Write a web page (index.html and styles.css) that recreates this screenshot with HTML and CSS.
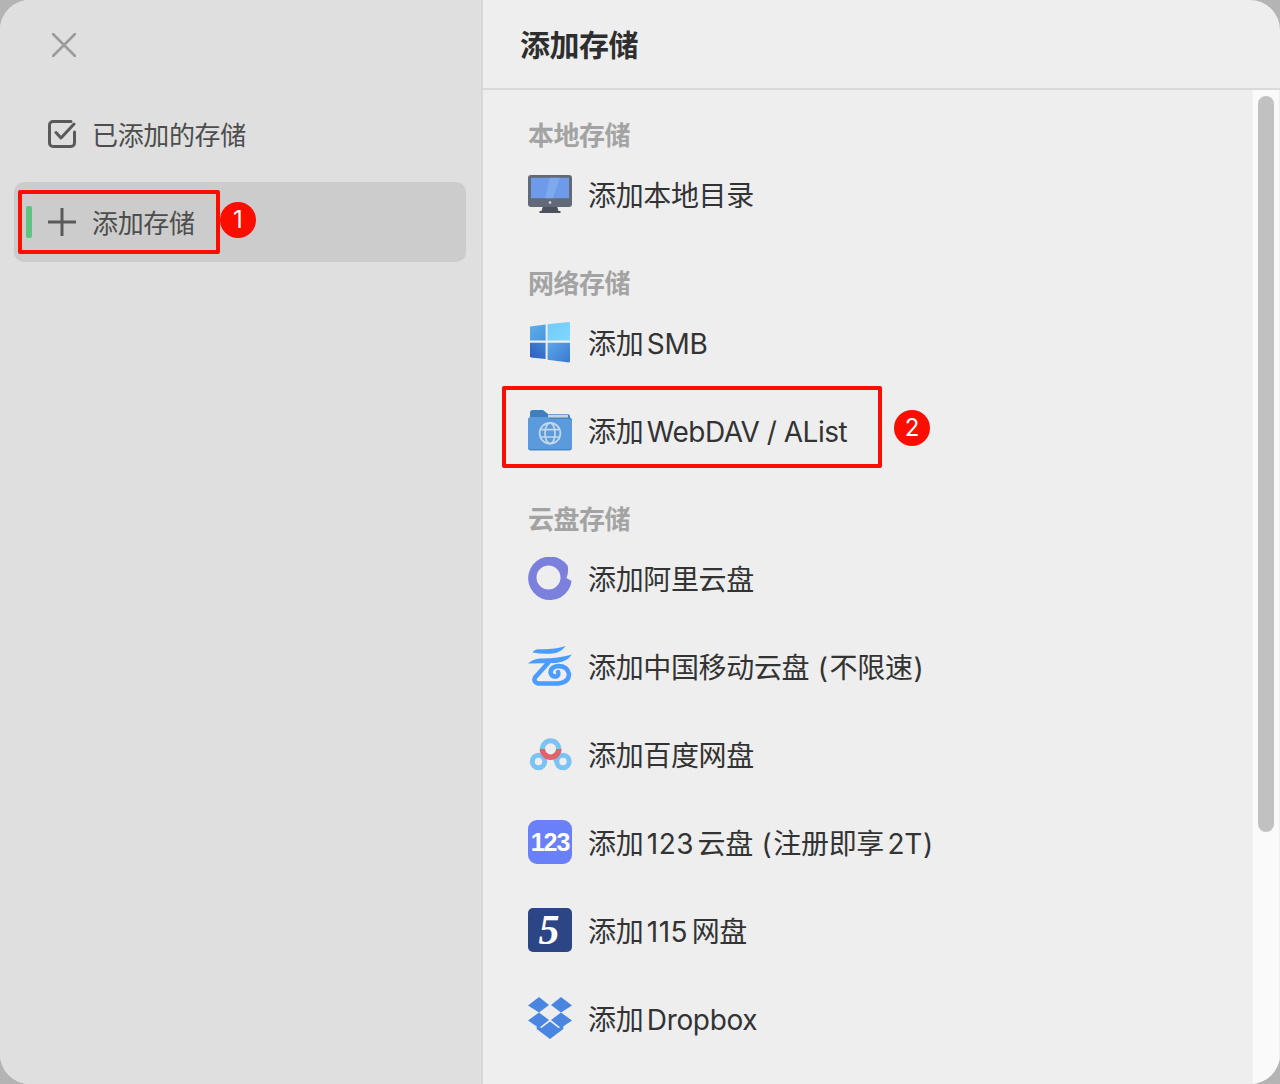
FILE: index.html
```html
<!DOCTYPE html>
<html lang="zh-CN">
<head>
<meta charset="utf-8">
<title>添加存储</title>
<link rel="stylesheet" href="styles.css">
</head>
<body>
<div class="window">
  <aside class="sidebar">
    <div class="side-head">
      <svg class="close" viewBox="0 0 24 24"><path d="M1 1 23 23M23 1 1 23"/></svg>
    </div>
    <nav class="nav">
      <div class="nav-item">
        <svg class="nav-icon" viewBox="0 0 28 28"><path d="M23 1.5H5A3.5 3.5 0 0 0 1.5 5V23A3.5 3.5 0 0 0 5 26.5H23A3.5 3.5 0 0 0 26.5 23V12M8 12.5 13 18 26 4"/></svg>
        <span class="nav-text">已添加的存储</span>
      </div>
      <div class="nav-item active">
        <i class="active-bar"></i>
        <svg class="nav-icon" viewBox="0 0 28 28"><path d="M14 0V28M0 14H28"/></svg>
        <span class="nav-text">添加存储</span>
      </div>
    </nav>
  </aside>
  <main class="main">
    <header class="main-head"><span class="head-text">添加存储</span></header>
    <div class="main-body">
      <div class="list">
        <section class="group">
          <h2 class="group-title">本地存储</h2>
          <div class="row">
            <svg class="logo" viewBox="0 0 44 44">
              <path fill="#4b525e" d="M15 33H29L30.5 38H32.5V40H11.5V38H13.5Z"/>
              <rect y="2" width="44" height="32" rx="3" fill="#636a77"/>
              <rect x="3" y="4.8" width="38" height="20.4" fill="#6d9bea"/>
              <path fill="#7fa8ed" d="M22 4.8H32L25 25.2H17Z"/>
              <circle cx="22" cy="29.6" r="1.3" fill="#d5d8dd"/>
            </svg>
            <span class="row-text">添加本地目录</span>
          </div>
        </section>
        <section class="group">
          <h2 class="group-title">网络存储</h2>
          <div class="row">
            <svg class="logo" viewBox="0 0 44 44">
              <defs>
                <linearGradient id="w1" x1="0" y1="0" x2="1" y2="1"><stop offset="0" stop-color="#5cb0ea"/><stop offset="1" stop-color="#4a94dd"/></linearGradient>
                <linearGradient id="w2" x1="0" y1="0" x2="1" y2="1"><stop offset="0" stop-color="#6fcbf8"/><stop offset="1" stop-color="#80d8ff"/></linearGradient>
                <linearGradient id="w3" x1="1" y1="0" x2="0" y2="1"><stop offset="0" stop-color="#3f86d8"/><stop offset="1" stop-color="#2f5cbc"/></linearGradient>
                <linearGradient id="w4" x1="0" y1="0" x2="1" y2="1"><stop offset="0" stop-color="#5aa8e8"/><stop offset="1" stop-color="#3b78cf"/></linearGradient>
              </defs>
              <path fill="url(#w1)" d="M2 5.5 17.6 3.6V19.6H2Z"/>
              <path fill="url(#w2)" d="M19.6 3.3 41 1 42 2V19.6H19.6Z"/>
              <path fill="url(#w3)" d="M2 21.8H17.6V38L3 36.4 2 35.4Z"/>
              <path fill="url(#w4)" d="M19.6 21.8H42V40.5L41 41.4 19.6 38.8Z"/>
            </svg>
            <span class="row-text">添加 SMB</span>
          </div>
          <div class="row">
            <svg class="logo" viewBox="0 0 44 44">
              <path fill="#3f7fbe" d="M2 4A3 3 0 0 1 5 1H15L20 5H39A3 3 0 0 1 42 8V14H2Z"/>
              <path fill="#c9d3dc" d="M20 5.6H40V12H20Z"/>
              <rect y="8.5" width="44" height="33" rx="3" fill="#4a86c5"/>
              <path fill="#5b9bdc" d="M3 8H19L22 10H41A3 3 0 0 1 44 13V37A3 3 0 0 1 41 40H3A3 3 0 0 1 0 37V11A3 3 0 0 1 3 8Z"/>
              <g class="globe">
                <circle cx="22" cy="24.3" r="10.4"/>
                <ellipse cx="22" cy="24.3" rx="5" ry="10.4"/>
                <path d="M13 20.6H31M13 28H31"/>
              </g>
            </svg>
            <span class="row-text">添加 <span class="wide">WebDAV / AList</span></span>
          </div>
        </section>
        <section class="group">
          <h2 class="group-title">云盘存储</h2>
          <div class="row">
            <svg class="logo" viewBox="0 0 44 44">
              <path fill="#7a80dc" fill-rule="evenodd" d="M43.6 24A21.8 21.8 0 1 1 39.6 8.5Q41 15 38.5 21ZM32.5 20.5A12 12 0 1 0 8.5 20.5A12 12 0 1 0 32.5 20.5Z"/>
            </svg>
            <span class="row-text">添加阿里云盘</span>
          </div>
          <div class="row">
            <svg class="logo" viewBox="0 0 44 44">
              <g fill="#4b9cff">
                <path d="M4.5 7.5Q7 4 11 4.2Q25 5 37.5 1Q33 7.5 25 8.5Q15 9.5 4.5 7.5Z"/>
                <path d="M0 18.5Q5 14 12 13.5Q28 14 44 9.5Q39 17 28 18Q14 18 0 18.5Z"/>
              </g>
              <path class="cm-stroke" d="M20.5 17.5 7 32.5Q5 37 10 38.5H30Q41 37.5 41 29Q39.5 21 30 21Q22.5 22 22.5 27.5Q23.5 32 28 31.5Q31.5 30.5 30 27"/>
            </svg>
            <span class="row-text">添加中国移动云盘 <span class="p-open">(</span>不限速<span class="p-close">)</span></span>
          </div>
          <div class="row">
            <svg class="logo" viewBox="0 0 44 44">
              <g class="bd-blue">
                <path d="M14.4 16A8.2 8.2 0 0 1 30.8 16"/>
                <circle cx="10.5" cy="28.5" r="6.2"/>
                <circle cx="35" cy="28.5" r="6.2"/>
                <path d="M16 25 19 23M30 23 28 27"/>
              </g>
              <path class="bd-red" d="M14.4 16A8.2 8.2 0 0 0 30.8 16"/>
            </svg>
            <span class="row-text">添加百度网盘</span>
          </div>
          <div class="row">
            <svg class="logo logo-up" viewBox="0 0 44 44">
              <rect width="44" height="44" rx="9" fill="#6a80f9"/>
              <text class="logo-123" x="22" y="31" text-anchor="middle">123</text>
            </svg>
            <span class="row-text">添加 <span class="num">123</span> 云盘 <span class="p-open">(</span>注册即享 2T<span class="p-close">)</span></span>
          </div>
          <div class="row">
            <svg class="logo logo-up" viewBox="0 0 44 44">
              <rect width="44" height="44" rx="5" fill="#2c4585"/>
              <text class="logo-115" x="21" y="36" text-anchor="middle">5</text>
            </svg>
            <span class="row-text">添加 <span class="num">115</span> 网盘</span>
          </div>
          <div class="row">
            <svg class="logo" viewBox="0 0 44 44">
              <path fill="#4a86e0" d="M11 0 21 8 11 15.5 0 8.5ZM33 0 44 8.5 33 15.5 23 8ZM11 15.5 21 23 11 31 0 23.5ZM33 15.5 44 23.5 33 31 23 23ZM22 24.5 30.5 31 35.3 28.8V32L22 42 8.7 32V28.8L13.5 31Z"/>
            </svg>
            <span class="row-text">添加 Dropbox</span>
          </div>
        </section>
      </div>
      <div class="track"><div class="thumb"></div></div>
    </div>
  </main>
  <div class="mark mark-one"></div>
  <div class="badge badge-one">1</div>
  <div class="mark mark-two"></div>
  <div class="badge badge-two">2</div>
</div>
</body>
</html>
```

FILE: styles.css
```css
* { box-sizing: border-box; }
html, body { margin: 0; height: 100%; }
body {
  background: #b4b4b4;
  overflow: hidden;
  font-family: "Inter", "Noto Sans CJK SC", sans-serif;
}
.window {
  position: relative;
  display: flex;
  width: 1280px;
  height: 1084px;
  border-radius: 30px;
  overflow: hidden;
  background: #eeeeee;
}
.sidebar {
  width: 483px;
  flex: none;
  padding: 0 15px 0 14px;
  background: #dfdfdf;
  border-right: 2px solid #d7d7d7;
}
.side-head { height: 94px; padding: 33px 0 0 38px; }
.close { display: block; width: 24px; height: 24px; }
.close path { fill: none; stroke: #9b9b9b; stroke-width: 2.6; stroke-linecap: round; }
.nav { display: flex; flex-direction: column; gap: 8px; }
.nav-item {
  display: flex;
  align-items: center;
  gap: 16px;
  height: 80px;
  padding-left: 34px;
  border-radius: 10px;
  font-size: 26px;
  letter-spacing: -0.35px;
  color: #4d4d4d;
}
.nav-item.active { background: #cccccc; padding-left: 12px; }
.nav-text { margin-top: -2px; }
.active-bar {
  width: 6px;
  height: 32px;
  border-radius: 2px;
  background: #5ec581;
}
.nav-icon { width: 28px; height: 28px; flex: none; }
.nav-icon path { fill: none; stroke: #5a5a5a; stroke-width: 3; stroke-linecap: round; stroke-linejoin: round; }
.main { flex: 1; min-width: 0; display: flex; flex-direction: column; }
.main-head {
  height: 90px;
  flex: none;
  padding: 0 0 0 37px;
  display: flex;
  align-items: center;
  border-bottom: 2px solid #d9d9d9;
  font-size: 30px;
  font-weight: 600;
  letter-spacing: -0.5px;
  color: #2e2e2e;
}
.head-text { margin-top: -2px; }
.main-body { flex: 1; min-height: 0; display: flex; }
.list { flex: 1; min-width: 0; overflow: hidden; padding: 29px 0 0 45px; }
.group { margin-bottom: 28px; }
.group-title {
  margin: 0;
  height: 32px;
  padding-top: 1px;
  line-height: 32px;
  font-size: 26px;
  font-weight: 600;
  letter-spacing: -0.5px;
  color: #a3a3a3;
}
.row {
  display: flex;
  align-items: center;
  gap: 16px;
  height: 88px;
  font-size: 28px;
  letter-spacing: -0.35px;
  word-spacing: -4px;
  color: #333333;
}
.row-text { margin-top: -2px; white-space: nowrap; }
.wide { word-spacing: 0; letter-spacing: -0.5px; }
.num { letter-spacing: 0.5px; }
.p-open { margin: 0 2px 0 5px; }
.p-close { margin-left: 1px; }
.logo { width: 44px; height: 44px; flex: none; }
.logo-up { margin-top: -2px; }
.globe { fill: none; stroke: #c4d8ed; stroke-width: 1.7; }
.cm-stroke { fill: none; stroke: #4b9cff; stroke-width: 4.5; stroke-linecap: round; stroke-linejoin: round; }
.bd-blue { fill: none; stroke: #7cc3f5; stroke-width: 5; stroke-linecap: round; }
.bd-red { fill: none; stroke: #e0636b; stroke-width: 5.5; }
.logo-123 { fill: #ffffff; font-family: "Liberation Sans", sans-serif; font-weight: 700; font-size: 25px; letter-spacing: -1px; word-spacing: 0; }
.logo-115 { fill: #ffffff; font-family: "Liberation Serif", serif; font-weight: 700; font-style: italic; font-size: 42px; letter-spacing: 0; }
.track { width: 28px; flex: none; padding: 6px 6px 0; background: #fafafa; border-left: 1px solid #f1f1f1; border-right: 1px solid #eeeeee; }
.thumb { width: 16px; height: 736px; margin-left: -1px; border-radius: 8px; background: #c1c1c1; }
.mark { position: absolute; border: 4px solid #fb0d00; border-radius: 2px; }
.mark-one { left: 18px; top: 190px; width: 202px; height: 64px; }
.mark-two { left: 502px; top: 386px; width: 380px; height: 82px; }
.badge {
  position: absolute;
  width: 36px;
  height: 36px;
  border-radius: 50%;
  background: #fb0d00;
  color: #ffffff;
  font-size: 24px;
  line-height: 36px;
  text-align: center;
}
.badge-one { left: 220px; top: 202px; }
.badge-two { left: 894px; top: 410px; }
```
